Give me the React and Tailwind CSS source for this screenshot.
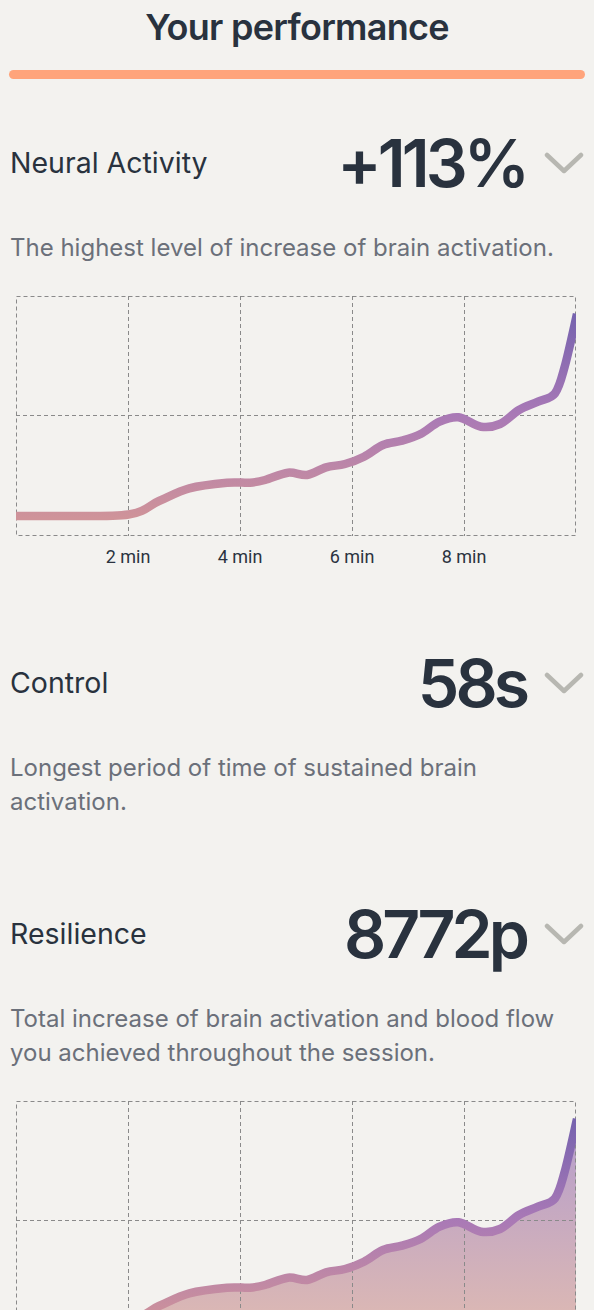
import React from "react";

const PTS = [
  [-4, 220], [40, 220], [112.6, 218.5], [143, 205], [173.3, 192.3], [211, 186.7], [234, 186.7],
  [249, 184], [272, 176.7], [291, 179], [310, 171.3], [329, 168], [348, 160.7], [367, 149],
  [386, 144.7], [404.6, 138], [423.6, 125.7], [442.5, 121.3], [465, 130.7], [484, 128],
  [503, 114], [522, 105.7], [539, 97.3], [548.7, 70.7], [561, 18],
];

function smoothPath(pts) {
  let d = `M${pts[0][0]},${pts[0][1]}`;
  for (let i = 0; i < pts.length - 1; i++) {
    const p0 = pts[i - 1] || pts[i];
    const p1 = pts[i];
    const p2 = pts[i + 1];
    const p3 = pts[i + 2] || p2;
    const c1x = p1[0] + (p2[0] - p0[0]) / 6;
    const c1y = p1[1] + (p2[1] - p0[1]) / 6;
    const c2x = p2[0] - (p3[0] - p1[0]) / 6;
    const c2y = p2[1] - (p3[1] - p1[1]) / 6;
    d += ` C${c1x.toFixed(2)},${c1y.toFixed(2)} ${c2x.toFixed(2)},${c2y.toFixed(2)} ${p2[0]},${p2[1]}`;
  }
  return d;
}

const LINE = smoothPath(PTS);
const AREA = LINE + " L561,240 L-4,240 Z";

function Chart({ id, area }) {
  return (
    <div className="ml-[6px] w-[560px]">
      <svg width="560" height="240" viewBox="0 0 560 240" className="block">
        <defs>
          <linearGradient id={`line-${id}`} x1="0" y1="15" x2="0" y2="222" gradientUnits="userSpaceOnUse">
            <stop offset="0" stopColor="#7462ae" />
            <stop offset="0.5" stopColor="#a979b6" />
            <stop offset="1" stopColor="#cf9399" />
          </linearGradient>
          <linearGradient id={`area-${id}`} x1="0" y1="15" x2="0" y2="240" gradientUnits="userSpaceOnUse">
            <stop offset="0" stopColor="#b39ccd" />
            <stop offset="1" stopColor="#e0bbb1" />
          </linearGradient>
        </defs>
        {area && <path d={AREA} fill={`url(#area-${id})`} />}
        <g stroke="#8a8a8a" strokeWidth="1" strokeDasharray="4 3" fill="none">
          <rect x="0.5" y="0.5" width="559" height="239" />
          <line x1="112.5" y1="0" x2="112.5" y2="240" />
          <line x1="224.5" y1="0" x2="224.5" y2="240" />
          <line x1="336.5" y1="0" x2="336.5" y2="240" />
          <line x1="448.5" y1="0" x2="448.5" y2="240" />
          <line x1="0" y1="119.5" x2="560" y2="119.5" />
        </g>
        <path d={LINE} fill="none" stroke={`url(#line-${id})`} strokeWidth="8.5" strokeLinejoin="round" />
      </svg>
      <div className="flex pl-[56px] h-[24px] mt-[8px] items-center text-[18px] text-[#2b3340] font-['Roboto',sans-serif]">
        <div className="w-[112px] text-center">2 min</div>
        <div className="w-[112px] text-center">4 min</div>
        <div className="w-[112px] text-center">6 min</div>
        <div className="w-[112px] text-center">8 min</div>
      </div>
    </div>
  );
}

function Chevron() {
  return (
    <svg width="40" height="24" viewBox="0 0 40 24" className="block shrink-0">
      <path d="M3 4 L20 20 L37 4" fill="none" stroke="#b7b7b1" strokeWidth="4.5" strokeLinecap="round" strokeLinejoin="round" />
    </svg>
  );
}

function Section({ label, value, desc, chart, id, area }) {
  return (
    <section>
      <div className="h-[80px] flex items-center justify-between">
        <div className="text-[28.5px] text-[#29323e]">{label}</div>
        <div className="flex items-center gap-[18px]">
          <div className="text-[66px] font-semibold leading-none text-[#29323e] tracking-[-0.06em]">{value}</div>
          <Chevron />
        </div>
      </div>
      <p className="mt-[28px] text-[24px] leading-[34px] text-[#6b707a]">{desc}</p>
      {chart && (
        <div className="mt-[31px]">
          <Chart id={id} area={area} />
        </div>
      )}
    </section>
  );
}

export default function App() {
  return (
    <div className="min-h-[1310px] bg-[#f3f2ef] px-[10px] font-['Inter',sans-serif] overflow-hidden">
      <h1 className="h-[52px] leading-[54px] text-center text-[36px] font-semibold text-[#29323e] tracking-[-0.02em]">
        Your performance
      </h1>
      <div className="mt-[18px] h-[9px] rounded-full bg-[#ffa47b] -mx-[1px]" />
      <div className="mt-[44px] flex flex-col gap-[75px]">
        <Section
          id="a"
          label="Neural Activity"
          value="+113%"
          desc="The highest level of increase of brain activation."
          chart
        />
        <Section
          id="b"
          label="Control"
          value="58s"
          desc="Longest period of time of sustained brain activation."
        />
        <Section
          id="c"
          label="Resilience"
          value="8772p"
          desc="Total increase of brain activation and blood flow you achieved throughout the session."
          chart
          area
        />
      </div>
    </div>
  );
}
